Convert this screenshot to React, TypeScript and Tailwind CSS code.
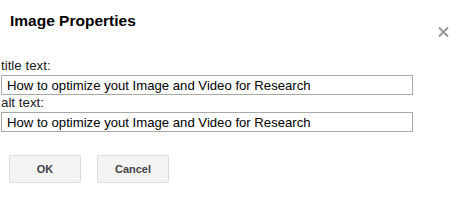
import React from "react";

export default function App() {
  return (
    <div className="relative w-[456px] h-[202px] bg-white text-black" style={{ fontFamily: '"Liberation Sans", Arial, sans-serif' }}>
      <div className="pt-[12px] pl-[10px] text-[15.5px] leading-[18px] font-bold text-[#000]">Image Properties</div>
      <button className="absolute left-[437px] top-[26px] w-[12px] h-[11px] flex items-center justify-center" aria-label="Close">
        <svg width="11" height="10" viewBox="0 0 11 10">
          <path d="M1 0.5 L10 9.5 M10 0.5 L1 9.5" stroke="#9a9a9a" strokeWidth="2" />
        </svg>
      </button>
      <div className="mt-[28px] pl-[1px] flex flex-col">
        <label className="text-[13.33px] leading-[15px] text-[#222]">title text:</label>
        <input
          readOnly
          value="How to optimize yout Image and Video for Research"
          className="mt-[2px] w-[412px] h-[20px] border border-[#a9a9a9] bg-white px-[5px] text-[13.15px] text-black outline-none"
          style={{ fontFamily: '"Liberation Sans", Arial, sans-serif' }}
        />
        <label className="mt-[0px] text-[13.33px] leading-[15px] text-[#222]">alt text:</label>
        <input
          readOnly
          value="How to optimize yout Image and Video for Research"
          className="mt-[2px] w-[412px] h-[20px] border border-[#a9a9a9] bg-white px-[5px] text-[13.15px] text-black outline-none"
          style={{ fontFamily: '"Liberation Sans", Arial, sans-serif' }}
        />
      </div>
      <div className="mt-[23px] pl-[9px] flex gap-[16px]">
        <button className="w-[72px] h-[28px] rounded-[2px] border border-[#dcdcdc] bg-[#f3f3f3] text-[11px] font-bold text-[#444]">OK</button>
        <button className="w-[72px] h-[28px] rounded-[2px] border border-[#dcdcdc] bg-[#f3f3f3] text-[11px] font-bold text-[#444]">Cancel</button>
      </div>
    </div>
  );
}
